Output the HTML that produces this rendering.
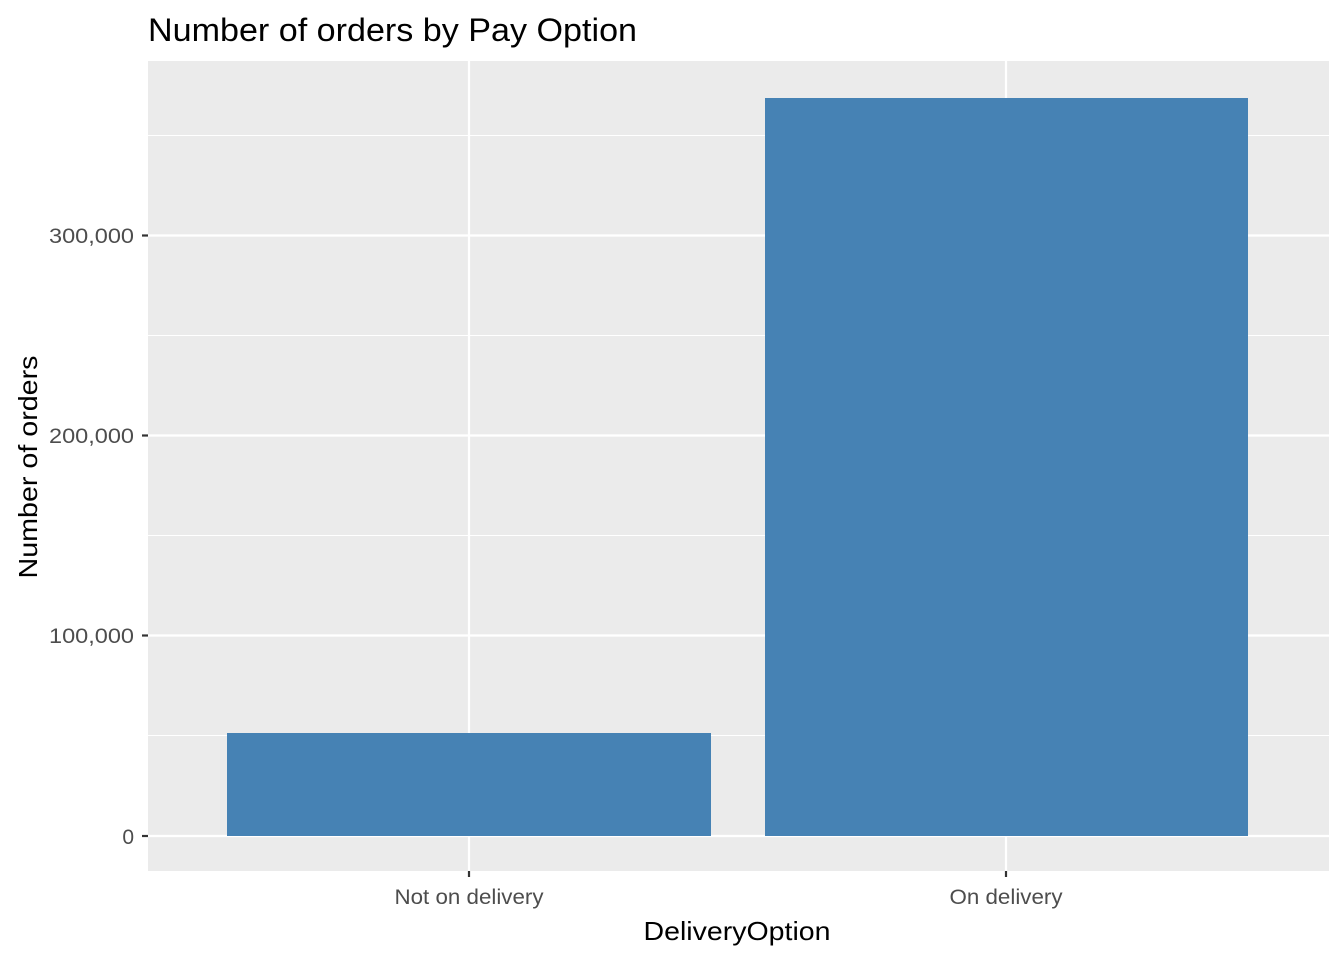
<!DOCTYPE html>
<html><head><meta charset="utf-8"><style>
html,body{margin:0;padding:0;background:#fff;}
svg{display:block;}
text{font-family:"Liberation Sans",Arial,sans-serif;}
</style></head><body>
<svg width="1344" height="960" viewBox="0 0 1344 960" xmlns="http://www.w3.org/2000/svg">
<rect x="0" y="0" width="1344" height="960" fill="#fff"/>
<rect x="148" y="61" width="1181" height="810" fill="#ebebeb"/>
<g stroke="#fff" stroke-width="1.1">
<line x1="148" x2="1329" y1="735.5" y2="735.5"/>
<line x1="148" x2="1329" y1="535.5" y2="535.5"/>
<line x1="148" x2="1329" y1="335.5" y2="335.5"/>
<line x1="148" x2="1329" y1="135.5" y2="135.5"/>
</g>
<g stroke="#fff" stroke-width="2.2">
<line x1="148" x2="1329" y1="836" y2="836"/>
<line x1="148" x2="1329" y1="635.5" y2="635.5"/>
<line x1="148" x2="1329" y1="435.5" y2="435.5"/>
<line x1="148" x2="1329" y1="235.5" y2="235.5"/>
<line x1="469" x2="469" y1="61" y2="871"/>
<line x1="1006" x2="1006" y1="61" y2="871"/>
</g>
<rect x="227" y="733" width="484" height="103" fill="#4682b4"/>
<rect x="765" y="98" width="483" height="738" fill="#4682b4"/>
<g stroke="#333" stroke-width="2.2">
<line x1="142" x2="148" y1="836" y2="836"/>
<line x1="142" x2="148" y1="635.5" y2="635.5"/>
<line x1="142" x2="148" y1="435.5" y2="435.5"/>
<line x1="142" x2="148" y1="235.5" y2="235.5"/>
<line x1="469" x2="469" y1="871" y2="877"/>
<line x1="1006" x2="1006" y1="871" y2="877"/>
</g>
<g fill="#4d4d4d" font-size="21" text-anchor="end">
<text x="134" y="844">0</text>
<text x="134" y="643" textLength="85" lengthAdjust="spacingAndGlyphs">100,000</text>
<text x="134" y="443" textLength="85" lengthAdjust="spacingAndGlyphs">200,000</text>
<text x="134" y="243" textLength="85" lengthAdjust="spacingAndGlyphs">300,000</text>
</g>
<g fill="#4d4d4d" font-size="21" text-anchor="middle">
<text x="469" y="904" textLength="149" lengthAdjust="spacingAndGlyphs">Not on delivery</text>
<text x="1006" y="904" textLength="113" lengthAdjust="spacingAndGlyphs">On delivery</text>
</g>
<text x="737" y="940" font-size="26" text-anchor="middle" fill="#000" textLength="187" lengthAdjust="spacingAndGlyphs">DeliveryOption</text>
<text transform="translate(37,467) rotate(-90)" font-size="26" text-anchor="middle" fill="#000" textLength="223" lengthAdjust="spacingAndGlyphs">Number of orders</text>
<text x="148" y="41" font-size="32" fill="#000" textLength="489" lengthAdjust="spacingAndGlyphs">Number of orders by Pay Option</text>
</svg>
</body></html>
